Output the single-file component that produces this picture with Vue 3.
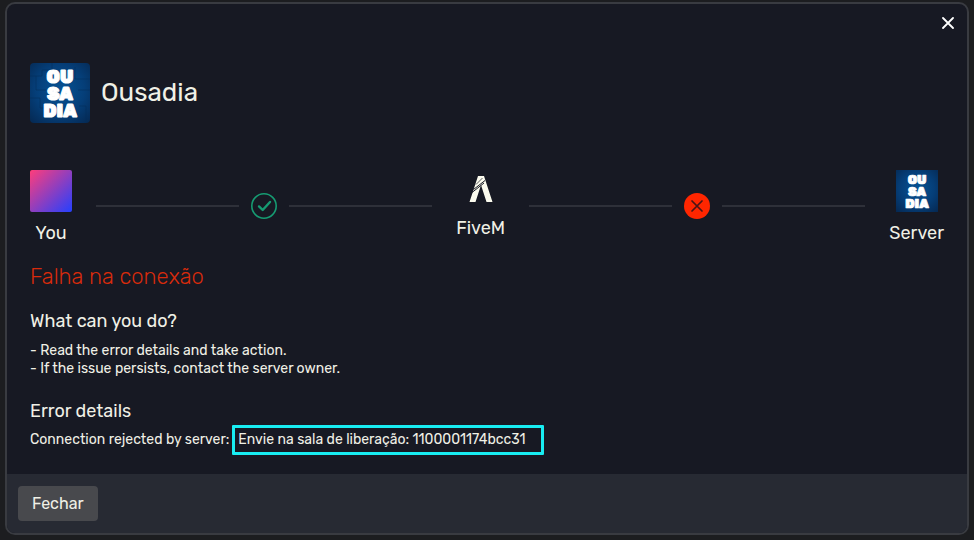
<script setup>
const tips = [
  '- Read the error details and take action.',
  '- If the issue persists, contact the server owner.',
]
const logoLines = [
  { text: 'OU', y: 20 },
  { text: 'SA', y: 37 },
  { text: 'DIA', y: 54 },
]
</script>

<template>
  <main class="backdrop">
    <section class="dialog" role="dialog" aria-labelledby="server-name">
      <button class="close" type="button" aria-label="Close">
        <svg viewBox="0 0 12 12" width="12" height="12">
          <path d="M1 1 11 11M11 1 1 11" stroke="#fff" stroke-width="1.8" stroke-linecap="round" />
        </svg>
      </button>

      <div class="body">
        <header class="server">
          <svg class="logo large" viewBox="0 0 60 60" aria-hidden="true">
            <defs>
              <radialGradient id="sea" cx=".5" cy=".45" r=".75">
                <stop offset="0" stop-color="#075394" />
                <stop offset=".55" stop-color="#053e78" />
                <stop offset="1" stop-color="#052750" />
              </radialGradient>
            </defs>
            <rect width="60" height="60" fill="url(#sea)" />
            <path d="M0 13H12V7H24M45 4V16H60M0 35H10V45H17M48 27H60M49 43H56V60M6 13V27H16M22 0V7" fill="none" stroke="#062c58" opacity=".5" />
            <text v-for="line in logoLines" :key="line.text" x="30" :y="line.y" class="logo-text">{{ line.text }}</text>
          </svg>
          <h1 id="server-name">Ousadia</h1>
        </header>

        <div class="route">
          <div class="stop">
            <div class="avatar"></div>
            <span>You</span>
          </div>
          <div class="link">
            <i class="line"></i>
            <svg viewBox="0 0 26 26" class="state">
              <circle cx="13" cy="13" r="12.2" fill="none" stroke="#169b72" stroke-width="1.6" />
              <path d="M8 13.4 11.7 17 19 9" fill="none" stroke="#169b72" stroke-width="2.4" stroke-linecap="round" stroke-linejoin="round" />
            </svg>
            <i class="line"></i>
          </div>
          <div class="stop">
            <svg class="five" viewBox="0 0 26 32">
              <path d="M10 1H16L24.500 27H18.500L13 10 7.500 27H1.500Z" fill="#fbfbee" />
              <path d="M4 17.500 16 8M5.500 14.500 17 5.500" stroke="#171923" stroke-width="1" />
              <path d="M8 9.500 14.500 3" stroke="#171923" stroke-width=".7" />
            </svg>
            <span>FiveM</span>
          </div>
          <div class="link">
            <i class="line"></i>
            <svg viewBox="0 0 26 26" class="state">
              <circle cx="13" cy="13" r="13" fill="#ff2600" />
              <path d="M8 8 18 18M18 8 8 18" stroke="#481516" stroke-width="1.7" stroke-linecap="round" />
            </svg>
            <i class="line"></i>
          </div>
          <div class="stop">
            <svg class="logo" viewBox="0 0 60 60" aria-hidden="true">
              <rect width="60" height="60" fill="url(#sea)" />
              <text v-for="line in logoLines" :key="line.text" x="30" :y="line.y" class="logo-text">{{ line.text }}</text>
            </svg>
            <span>Server</span>
          </div>
        </div>

        <h2 class="failure">Falha na conexão</h2>

        <h3>What can you do?</h3>
        <p v-for="tip in tips" :key="tip">{{ tip }}</p>

        <h3 class="details">Error details</h3>
        <p class="reason">
          <span>Connection rejected by server:</span>
          <mark>Envie na sala de liberação: 1100001174bcc31</mark>
        </p>
      </div>

      <footer>
        <button class="dismiss" type="button">Fechar</button>
      </footer>
    </section>
  </main>
</template>

<style>
body {
  margin: 0;
  background: #1c1d20;
}
</style>

<style scoped>
.backdrop {
  box-sizing: border-box;
  min-height: 100vh;
  padding: 2px 5px 5px 5px;
  display: flex;
  background: #1c1d20;
  font-family: Rubik, Roboto, sans-serif;
  color: #f0f0e6;
}
.dialog {
  position: relative;
  flex: 1;
  display: flex;
  flex-direction: column;
  overflow: hidden;
  border: 2px solid #393b41;
  border-radius: 10px;
  background: #171923;
}
.close {
  position: absolute;
  top: 7px;
  right: 7px;
  width: 24px;
  height: 24px;
  padding: 6px;
  border: 0;
  background: none;
  cursor: pointer;
}
.close svg {
  display: block;
}
.body {
  flex: 1;
  padding: 59px 23px 18px;
}
.server {
  display: flex;
  align-items: center;
  gap: 11px;
}
.logo {
  display: block;
  width: 42px;
  height: 42px;
}
.logo.large {
  width: 60px;
  height: 60px;
  border-radius: 4px;
}
.logo-text {
  font: 900 18px Rubik, Roboto, sans-serif;
  text-anchor: middle;
  fill: #fff;
  stroke: #fff;
  stroke-width: 1px;
}
h1,
h2,
h3,
p {
  margin: 0;
  font-weight: 400;
}
h1 {
  font-size: 26px;
  line-height: 32px;
}
.route {
  display: flex;
  align-items: center;
  gap: 24px;
  margin-top: 47px;
}
.stop {
  display: flex;
  flex-direction: column;
  align-items: center;
  gap: 10px;
  font-size: 18px;
  line-height: 22px;
}
.avatar {
  width: 42px;
  height: 42px;
  border-radius: 2px;
  background: linear-gradient(135deg, #ff3d7b, #2440ff);
}
.five {
  width: 26px;
  height: 32px;
}
.link {
  flex: 1;
  display: flex;
  align-items: center;
  gap: 12px;
  padding-bottom: 2px;
}
.line {
  flex: 1;
  height: 2px;
  background: #2e3039;
}
.state {
  width: 26px;
  height: 26px;
}
.failure {
  margin-top: 18px;
  font-size: 22px;
  font-weight: 300;
  line-height: 30px;
  color: #d82b0c;
}
h3 {
  margin: 17px 0 9px;
  font-size: 18px;
  line-height: 24px;
}
p {
  font-size: 14px;
  line-height: 18px;
}
h3.details {
  margin: 21px 0 2px;
}
.reason {
  display: flex;
  align-items: center;
  gap: 3px;
}
mark {
  padding: 3px 16px 3px 3px;
  border: 3px solid #18edf2;
  border-radius: 1px;
  background: none;
  color: inherit;
}
footer {
  padding: 12px 11px;
  background: #272a33;
}
.dismiss {
  display: block;
  height: 35px;
  padding: 0 14px;
  border: 0;
  border-radius: 4px;
  background: #48494d;
  color: inherit;
  font: 400 16px/35px Rubik, Roboto, sans-serif;
  cursor: pointer;
}
</style>
